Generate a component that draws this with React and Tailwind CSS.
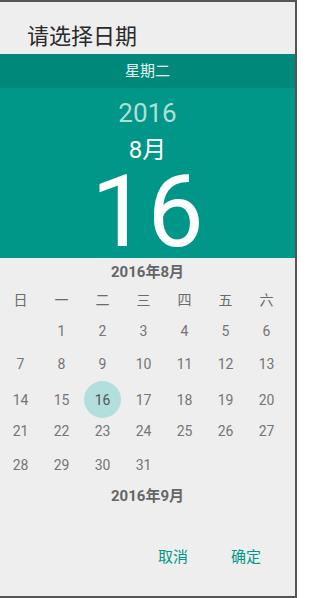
import React from "react";

const FONT = { fontFamily: "Roboto, 'Noto Sans CJK SC', sans-serif" };

const weekdays = ["日", "一", "二", "三", "四", "五", "六"];
const days = [
  [null, 1, 2, 3, 4, 5, 6],
  [7, 8, 9, 10, 11, 12, 13],
  [14, 15, 16, 17, 18, 19, 20],
  [21, 22, 23, 24, 25, 26, 27],
  [28, 29, 30, 31, null, null, null],
];

export default function App() {
  return (
    <div
      className="w-[297px] h-[598px] bg-[#eeeeee] border-t-2 border-r-2 border-b-2 border-[#555555] flex flex-col overflow-hidden"
      style={FONT}
    >
      <div className="h-[52px] flex items-center pt-[18px] pl-[27px] text-[22px] leading-none text-[#2a2a2a]">
        请选择日期
      </div>
      <div className="h-[34px] bg-[#00897b] flex items-center justify-center text-[15px] leading-none text-white/90">
        星期二
      </div>
      <div className="h-[170px] bg-[#009688] flex flex-col items-center text-white">
        <div className="mt-[8px] h-[34px] flex items-center text-[26px] leading-none text-white/70">
          2016
        </div>
        <div className="h-[40px] flex items-center text-[24px] leading-none">
          8月
        </div>
        <div className="h-[83px] flex items-center text-[100px] leading-[83px]">
          16
        </div>
      </div>
      <div className="h-[28px] flex items-center justify-center text-[15px] font-bold leading-none text-[#666666]">
        2016年8月
      </div>
      <div className="w-[287px] grid grid-cols-7 h-[28px] items-center text-[14px] leading-none text-[#6b6b6b]">
        {weekdays.map((w) => (
          <div key={w} className="text-center">
            {w}
          </div>
        ))}
      </div>
      <div className="w-[287px] flex flex-col">
        {days.map((row, i) => (
          <div key={i} className="grid grid-cols-7 h-[33.5px] items-center">
            {row.map((d, j) => (
              <div key={j} className="flex items-center justify-center">
                {d === 16 ? (
                  <div className="w-[37px] h-[37px] rounded-full bg-[#b2dfdb] flex items-center justify-center text-[14px] leading-none text-[#555555]">
                    {d}
                  </div>
                ) : (
                  <span className="text-[14px] leading-none text-[#757575]">
                    {d ?? ""}
                  </span>
                )}
              </div>
            ))}
          </div>
        ))}
      </div>
      <div className="h-[30px] flex items-center justify-center text-[15px] font-bold leading-none text-[#666666]">
        2016年9月
      </div>
      <div className="mt-[28px] h-[36px] flex justify-end pr-[17px] gap-[9px]">
        <button className="w-[64px] h-[36px] flex items-center justify-center text-[15px] leading-none text-[#009688]">
          取消
        </button>
        <button className="w-[64px] h-[36px] flex items-center justify-center text-[15px] leading-none text-[#009688]">
          确定
        </button>
      </div>
    </div>
  );
}
